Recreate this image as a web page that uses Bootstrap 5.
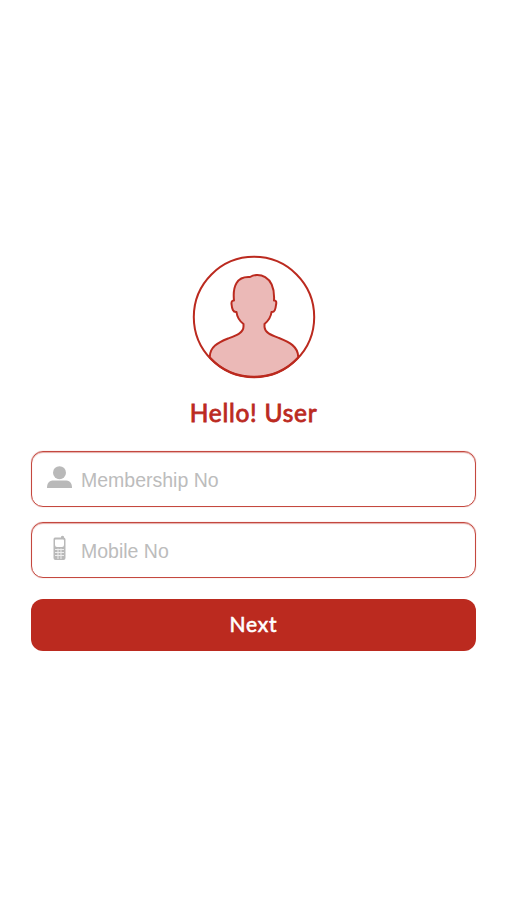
<!DOCTYPE html>
<html lang="en">
<head>
<meta charset="utf-8">
<meta name="viewport" content="width=device-width, initial-scale=1">
<title>Hello! User</title>
<link href="https://cdn.jsdelivr.net/npm/bootstrap@5.3.0/dist/css/bootstrap.min.css" rel="stylesheet">
<style>
:root { --brand: #bb2a1f; }
body { background: #fff; font-family: "Liberation Sans", Arial, sans-serif; }
.login { padding: 255px 31px 0; }
.avatar { width: 124px; height: 124px; }
.greeting { color: var(--brand); font: 400 24.5px/30px Lato, sans-serif; -webkit-text-stroke: .8px var(--brand); letter-spacing: .75px; margin: 19px 0 23px; }
.field { height: 56px; border: 1px solid #c4483f; border-radius: 12px; margin-bottom: 15px; padding-left: 14px; box-shadow: inset 0 1px 1px #e5aca8, 0 0 1px #d98a84; }
.field svg { width: 28px; height: 28px; margin-bottom: 3px; }
.field .phone-icon { margin-bottom: 5px; }
.field .form-control { font-size: 19.5px; line-height: 24px; padding: 2px 8px 0 7px; color: #555; }
.field .form-control::placeholder { color: #bcbcbc; opacity: 1; }
.btn-next { height: 52px; margin-top: 6px; border-radius: 12px; background: var(--brand); color: #fff; font: 400 21px/24px Lato, sans-serif; -webkit-text-stroke: .6px #fff; letter-spacing: .8px; padding: 0 0 2px; }
.btn-next:hover { background: #a3231a; color: #fff; }
</style>
</head>
<body>
<main class="login d-flex flex-column">
  <svg class="avatar align-self-center" viewBox="0 0 124 124" fill="none" stroke="#bb2a1f" stroke-width="2" stroke-linejoin="round">
    <path fill="#ebb9b7" d="M17.800 102.500C17.500 92 26 87.500 36 83.500C44 80.500 51.500 78 51.500 71.500V69C47.500 66 45 61.500 44.500 57C41 57.500 40 54 39.500 49C39.300 46 40.500 45.500 42 45.500C40.500 31 45 21 58 22C65 17.500 83.500 19 82 45.500C84 45 84.700 47 84 50C83.500 54.500 82.500 57.500 79.500 57C79 62 76 66 72.500 69V72C73 78 79 80 87 83C97 87 106.500 91.500 106.200 102.500A60.200 60.200 0 0 1 17.800 102.500Z"/>
    <circle cx="62" cy="62" r="60.200"/>
  </svg>
  <h1 class="greeting text-center">Hello! User</h1>
  <form class="d-flex flex-column">
    <div class="field d-flex align-items-center">
      <svg class="flex-shrink-0" viewBox="0 0 28 28" fill="#b9b9b9" aria-hidden="true"><circle cx="13.500" cy="8.700" r="6.500"/><path d="M1 24C1 18 4 16.500 8 16.500H19C23 16.500 26 18 26 24Z"/></svg>
      <input class="form-control border-0 bg-transparent shadow-none" type="text" placeholder="Membership No" aria-label="Membership No">
    </div>
    <div class="field d-flex align-items-center">
      <svg class="phone-icon flex-shrink-0" viewBox="0 0 28 28" aria-hidden="true">
        <path fill="#b9b9b9" fill-rule="evenodd" d="M9 3.500H15V2.500Q16.500 .8 18 2.500V3.500Q19.500 4 19.500 5.500V24Q19.500 26 17.500 26H9.500Q7.500 26 7.500 24V5.500Q7.500 3.500 9 3.500ZM9.500 5.500Q9 5.500 9 6.500V11Q9 13 11 13H16Q18 13 18 11V6.500Q18 5.500 17 5.500Z"/>
        <path stroke="#eee" stroke-width="1" d="M9 15.500H18M9 18.500H18M9 21.500H18M12 14.500V25M15 14.500V25"/>
      </svg>
      <input class="form-control border-0 bg-transparent shadow-none" type="tel" placeholder="Mobile No" aria-label="Mobile No">
    </div>
    <button class="btn btn-next border-0 w-100" type="button">Next</button>
  </form>
</main>
<script src="https://cdn.jsdelivr.net/npm/bootstrap@5.3.0/dist/js/bootstrap.bundle.min.js"></script>
</body>
</html>
